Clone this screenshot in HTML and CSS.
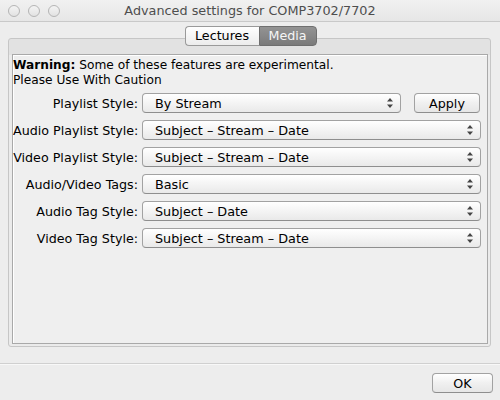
FILE: index.html
```html
<!DOCTYPE html>
<html>
<head>
<meta charset="utf-8">
<link rel="stylesheet" href="styles.css">
</head>
<body>
<div class="window">
  <div class="titlebar">
    <div class="lights"><span class="light"></span><span class="light"></span><span class="light"></span></div>
    <div class="title">Advanced settings for COMP3702/7702</div>
  </div>
  <div class="main">
    <div class="tabs">
      <div class="tab">Lectures</div>
      <div class="tab active">Media</div>
    </div>
    <div class="pane">
      <div class="inner">
        <p class="warning"><b>Warning:</b> Some of these features are experimental.<br>Please Use With Caution</p>
        <div class="form">
          <label class="lbl">Playlist Style:</label>
          <div class="with-btn">
            <div class="select"><span>By Stream</span><svg class="arrows" width="6" height="10" viewBox="0 0 6 10"><path d="M3 0L6 3.5H0Z M3 10L6 6.5H0Z" fill="#444"/></svg></div>
            <div class="btn apply">Apply</div>
          </div>
          <label class="lbl">Audio Playlist Style:</label>
          <div class="select"><span>Subject – Stream – Date</span><svg class="arrows" width="6" height="10" viewBox="0 0 6 10"><path d="M3 0L6 3.5H0Z M3 10L6 6.5H0Z" fill="#444"/></svg></div>
          <label class="lbl">Video Playlist Style:</label>
          <div class="select"><span>Subject – Stream – Date</span><svg class="arrows" width="6" height="10" viewBox="0 0 6 10"><path d="M3 0L6 3.5H0Z M3 10L6 6.5H0Z" fill="#444"/></svg></div>
          <label class="lbl">Audio/Video Tags:</label>
          <div class="select"><span>Basic</span><svg class="arrows" width="6" height="10" viewBox="0 0 6 10"><path d="M3 0L6 3.5H0Z M3 10L6 6.5H0Z" fill="#444"/></svg></div>
          <label class="lbl">Audio Tag Style:</label>
          <div class="select"><span>Subject – Date</span><svg class="arrows" width="6" height="10" viewBox="0 0 6 10"><path d="M3 0L6 3.5H0Z M3 10L6 6.5H0Z" fill="#444"/></svg></div>
          <label class="lbl">Video Tag Style:</label>
          <div class="select"><span>Subject – Stream – Date</span><svg class="arrows" width="6" height="10" viewBox="0 0 6 10"><path d="M3 0L6 3.5H0Z M3 10L6 6.5H0Z" fill="#444"/></svg></div>
        </div>
      </div>
    </div>
  </div>
  <div class="footer">
    <div class="btn ok">OK</div>
  </div>
</div>
</body>
</html>
```

FILE: styles.css
```css
* { box-sizing: border-box; }
html, body { margin: 0; padding: 0; }
body {
  width: 500px;
  height: 400px;
  background: #ededed;
  font-family: "DejaVu Sans", "Noto Sans", sans-serif;
  font-size: 12px;
  color: #000;
  overflow: hidden;
}
.window {
  width: 500px;
  height: 400px;
  display: flex;
  flex-direction: column;
}
.titlebar {
  height: 22px;
  border-bottom: 1px solid #c9c9c9;
  background: linear-gradient(#f1f1f1, #e6e6e6);
  display: flex;
  align-items: center;
  position: relative;
}
.lights {
  display: flex;
  gap: 8px;
  padding-left: 8px;
  position: absolute;
  left: 0;
  top: 5px;
}
.light {
  width: 12px;
  height: 12px;
  border-radius: 50%;
  border: 1px solid #b5b5b5;
  background: linear-gradient(#f4f4f4, #e2e2e2);
}
.title {
  flex: 1;
  text-align: center;
  color: #4e4e4e;
  font-size: 12.8px;
  line-height: 21px;
}
.main {
  padding: 4px 9px 0 8px;
  display: flex;
  flex-direction: column;
}
.tabs {
  display: flex;
  justify-content: center;
  margin-bottom: -8px;
  position: relative;
  z-index: 2;
  padding-left: 2px;
}
.tab {
  height: 20px;
  line-height: 18px;
  font-size: 12.7px;
  border: 1px solid #9a9a9a;
  background: linear-gradient(#ffffff, #ececec);
  text-align: center;
}
.tab:first-child {
  width: 74px;
  border-radius: 4px 0 0 4px;
  border-right: none;
}
.tab.active {
  width: 58px;
  border-radius: 0 4px 4px 0;
  background: linear-gradient(#939393, #7b7b7b);
  border-color: #6f6f6f;
  color: #f6f6f6;
}
.pane {
  height: 309px;
  border: 1px solid #c6c6c6;
  border-radius: 3px;
  background: linear-gradient(#e2e2e2 0, #e2e2e2 16px, #ebebeb 16px);
  padding: 15px 2px 2px 3px;
}
.inner {
  height: 100%;
  background: #efefef;
  border: 1px solid #a9a9a9;
  box-shadow: inset 1px 1px 0 #ffffff;
  padding: 3px 6px 0 0;
}
.warning {
  margin: 0;
  line-height: 15px;
  font-size: 12.2px;
}
.form {
  margin-top: 5px;
  display: grid;
  grid-template-columns: 125px 1fr;
  column-gap: 4px;
  row-gap: 7px;
  align-items: center;
}
.lbl {
  text-align: right;
  white-space: nowrap;
  font-size: 12.7px;
}
.with-btn {
  display: flex;
  gap: 13px;
  padding-right: 1px;
}
.with-btn .select { flex: 1; }
.select {
  height: 20px;
  border: 1px solid #a2a2a2;
  border-bottom-color: #8e8e8e;
  border-radius: 4px;
  background: linear-gradient(#ffffff, #f4f4f4 50%, #e9e9e9);
  display: flex;
  align-items: center;
  justify-content: space-between;
  padding: 0 7px 0 12px;
  font-size: 12.8px;
}
.btn {
  height: 20px;
  border: 1px solid #a2a2a2;
  border-bottom-color: #8e8e8e;
  border-radius: 4px;
  background: linear-gradient(#ffffff, #f0f0f0 50%, #e6e6e6);
  display: flex;
  align-items: center;
  justify-content: center;
  font-size: 12.7px;
}
.apply { width: 66px; }
.footer {
  margin-top: 16px;
  border-top: 1px solid #d0d0d0;
  box-shadow: inset 0 1px 0 #f8f8f8;
  display: flex;
  justify-content: flex-end;
  padding: 9px 7px 0 0;
}
.ok { width: 61px; }
```
